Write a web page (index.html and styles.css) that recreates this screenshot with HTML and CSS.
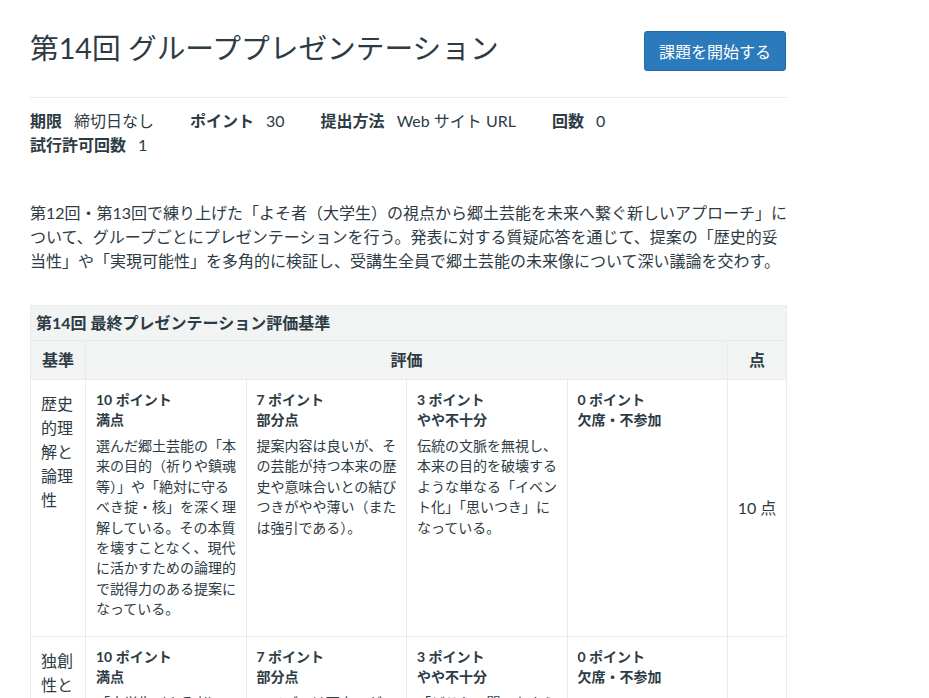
FILE: index.html
```html
<!DOCTYPE html>
<html lang="ja">
<head>
    <meta charset="UTF-8">
    <meta name="viewport" content="width=device-width, initial-scale=1.0">
    <title>第14回 グループプレゼンテーション</title>
    <link rel="stylesheet" href="styles.css">
</head>
<body>
    <div class="assignment">
        <div class="header">
            <h1 class="title">第14回 グループプレゼンテーション</h1>
            <button class="start-btn">課題を開始する</button>
        </div>
        <div class="details">
            <div class="detail"><span class="detail-label">期限</span><span class="detail-value">締切日なし</span></div>
            <div class="detail"><span class="detail-label">ポイント</span><span class="detail-value">30</span></div>
            <div class="detail"><span class="detail-label">提出方法</span><span class="detail-value">Web サイト URL</span></div>
            <div class="detail"><span class="detail-label">回数</span><span class="detail-value">0</span></div>
            <div class="detail"><span class="detail-label">試行許可回数</span><span class="detail-value">1</span></div>
        </div>
        <p class="description">第12回・第13回で練り上げた「よそ者（大学生）の視点から郷土芸能を未来へ繋ぐ新しいアプローチ」について、グループごとにプレゼンテーションを行う。発表に対する質疑応答を通じて、提案の「歴史的妥当性」や「実現可能性」を多角的に検証し、受講生全員で郷土芸能の未来像について深い議論を交わす。</p>

        <table class="rubric">
            <caption>第14回 最終プレゼンテーション評価基準</caption>
            <colgroup>
                <col class="col-criterion">
                <col class="col-rating">
                <col class="col-rating">
                <col class="col-rating">
                <col class="col-rating">
                <col class="col-points">
            </colgroup>
            <thead>
                <tr>
                    <th>基準</th>
                    <th colspan="4">評価</th>
                    <th>点</th>
                </tr>
            </thead>
            <tbody>
                <tr>
                    <td class="criterion">歴史的理解と論理性</td>
                    <td class="rating">
                        <div class="rating-points">10 ポイント</div>
                        <div class="rating-title">満点</div>
                        <div class="rating-desc">選んだ郷土芸能の「本来の目的（祈りや鎮魂等）」や「絶対に守るべき掟・核」を深く理解している。その本質を壊すことなく、現代に活かすための論理的で説得力のある提案になっている。</div>
                    </td>
                    <td class="rating">
                        <div class="rating-points">7 ポイント</div>
                        <div class="rating-title">部分点</div>
                        <div class="rating-desc">提案内容は良いが、その芸能が持つ本来の歴史や意味合いとの結びつきがやや薄い（または強引である）。</div>
                    </td>
                    <td class="rating">
                        <div class="rating-points">3 ポイント</div>
                        <div class="rating-title">やや不十分</div>
                        <div class="rating-desc">伝統の文脈を無視し、本来の目的を破壊するような単なる「イベント化」「思いつき」になっている。</div>
                    </td>
                    <td class="rating">
                        <div class="rating-points">0 ポイント</div>
                        <div class="rating-title">欠席・不参加</div>
                    </td>
                    <td class="points">10 点</td>
                </tr>
                <tr>
                    <td class="criterion">独創性と実現可能性</td>
                    <td class="rating">
                        <div class="rating-points">10 ポイント</div>
                        <div class="rating-title">満点</div>
                        <div class="rating-desc">「大学生（よそ者）」ならではの新しい視点が活かされ、地域の実情に即した具体的な提案になっている。</div>
                    </td>
                    <td class="rating">
                        <div class="rating-points">7 ポイント</div>
                        <div class="rating-title">部分点</div>
                        <div class="rating-desc">アイデアは面白いが、実現に向けた具体性や根拠がやや不足している。</div>
                    </td>
                    <td class="rating">
                        <div class="rating-points">3 ポイント</div>
                        <div class="rating-title">やや不十分</div>
                        <div class="rating-desc">「どこかで聞いたような」一般的な提案にとどまっている。</div>
                    </td>
                    <td class="rating">
                        <div class="rating-points">0 ポイント</div>
                        <div class="rating-title">欠席・不参加</div>
                    </td>
                    <td class="points">10 点</td>
                </tr>
            </tbody>
        </table>
    </div>
</body>
</html>
```

FILE: styles.css
```css
body {
    margin: 0;
    background-color: #fff;
    color: #2d3b45;
    font-family: Lato, "Noto Sans CJK JP", sans-serif;
    font-size: 16px;
    line-height: 24px;
}
.assignment {
    width: 757px;
    padding-left: 30px;
}
.header {
    display: flex;
    justify-content: space-between;
    align-items: flex-start;
    padding-top: 31px;
    padding-bottom: 26px;
    border-bottom: 1px solid #e8eaec;
}
.title {
    margin: 0;
    font-size: 28.7px;
    font-weight: normal;
    line-height: 34px;
}
.start-btn {
    height: 40px;
    margin-right: 1px;
    padding: 0 14px;
    background-color: #2b7abc;
    color: #fff;
    border: 1px solid #2568a3;
    border-radius: 3px;
    font-family: Lato, "Noto Sans CJK JP", sans-serif;
    font-size: 16px;
    cursor: pointer;
}
.details {
    display: flex;
    flex-wrap: wrap;
    padding-top: 11px;
}
.detail {
    margin-right: 36px;
}
.detail-label {
    font-weight: bold;
    margin-right: 12px;
}
.description {
    margin: 44px -2px 0 0;
}
.rubric {
    width: 757px;
    margin-top: 32px;
    border-collapse: collapse;
    table-layout: fixed;
    font-size: 16px;
}
.rubric caption {
    padding: 5px 5px 5px;
    background-color: #f2f4f4;
    border: 1px solid #e8eaec;
    border-bottom: none;
    text-align: left;
    font-weight: bold;
}
.col-criterion {
    width: 55px;
}
.col-points {
    width: 59px;
}
.rubric th,
.rubric td {
    border: 1px solid #e8eaec;
}
.rubric th {
    height: 38px;
    padding: 0 10px;
    background-color: #f2f4f4;
    font-weight: bold;
    text-align: center;
}
.rubric td {
    padding: 12px 10px 16px;
    vertical-align: top;
}
.rubric td.rating {
    padding: 10px 8px 16px 10px;
}
.rubric td.points {
    vertical-align: middle;
    text-align: center;
    padding: 0;
}
.rating-points,
.rating-title {
    font-size: 14px;
    font-weight: bold;
    line-height: 20px;
}
.rating-desc {
    margin-top: 6px;
    font-size: 14px;
    line-height: 20.4px;
}
```
